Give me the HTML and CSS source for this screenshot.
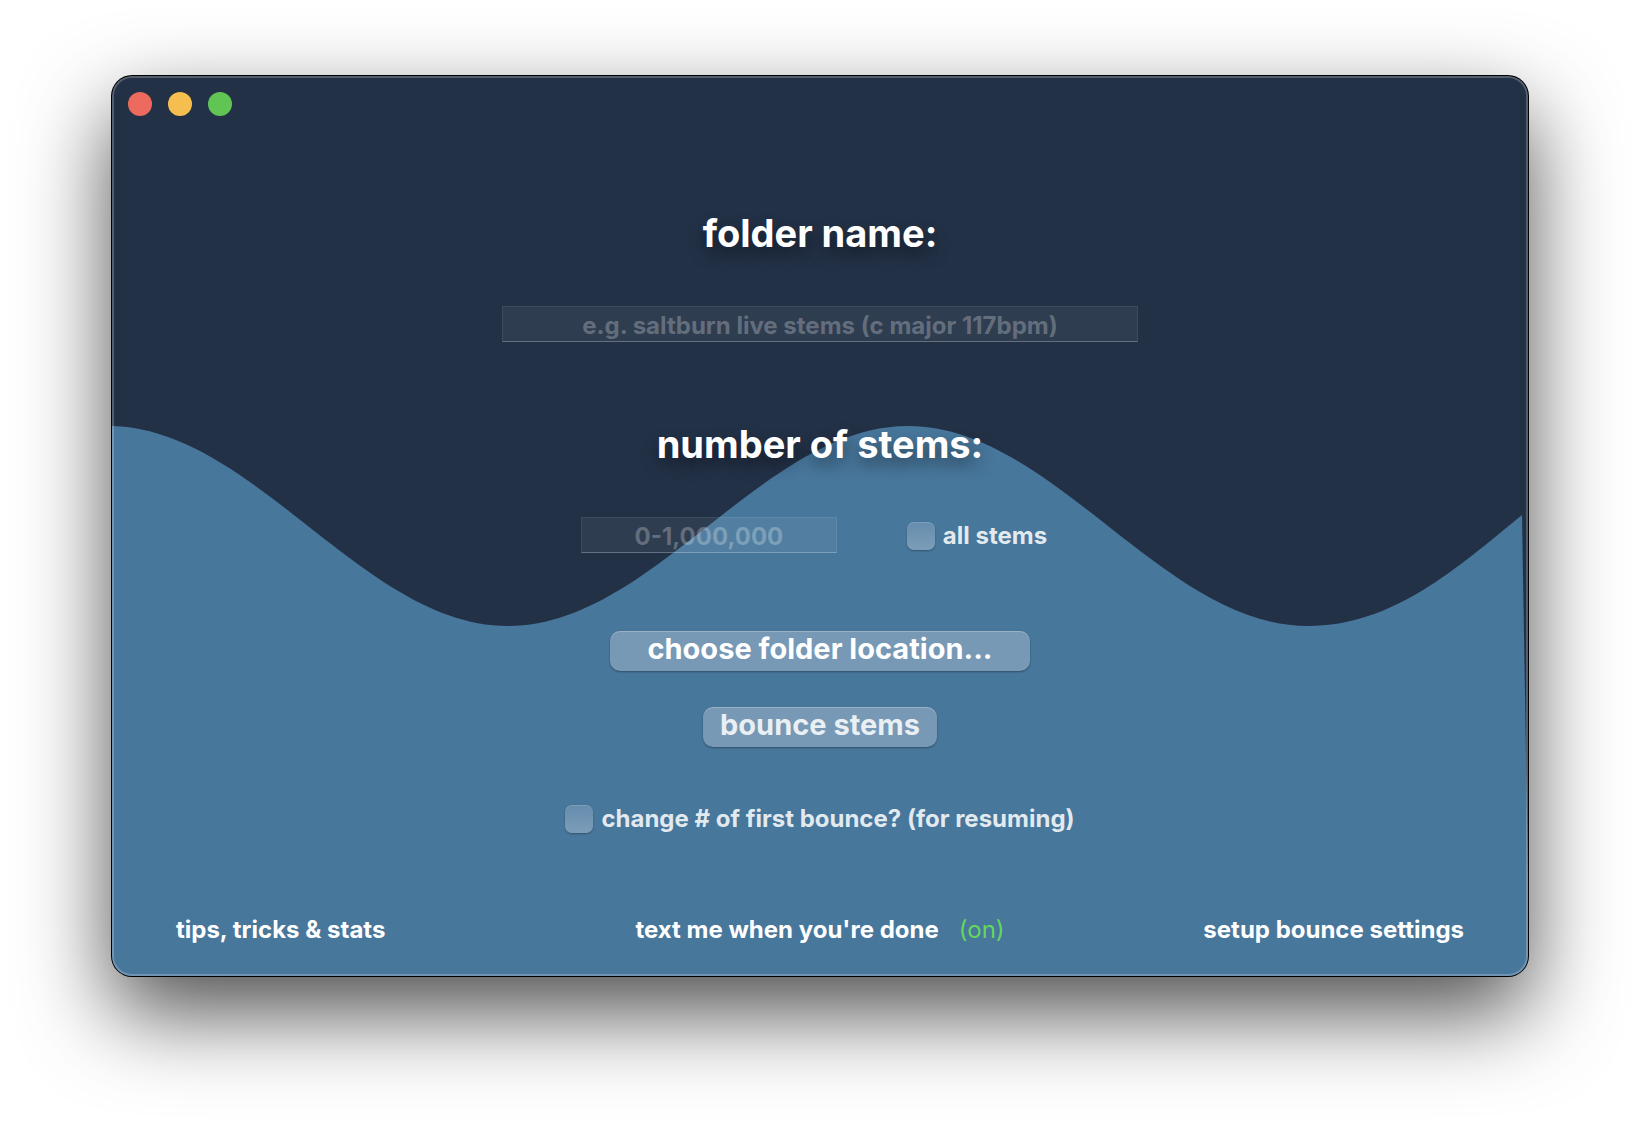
FILE: index.html
```html
<!DOCTYPE html>
<html lang="en">
<head>
<meta charset="utf-8">
<title>bounce stems</title>
<link rel="stylesheet" href="styles.css">
</head>
<body>
<main class="window">
  <svg class="wave" viewBox="0 0 1416 900" preserveAspectRatio="none" aria-hidden="true">
    <path d="M-4 350C141 350 251 550 396 550S651 350 796 350S1051 550 1196 550C1281 550 1345 492 1410 439L1416 800V900H-4Z"/>
  </svg>
  <div class="titlebar">
    <button class="light light-close" type="button" aria-label="Close"></button>
    <button class="light light-minimize" type="button" aria-label="Minimize"></button>
    <button class="light light-zoom" type="button" aria-label="Zoom"></button>
  </div>
  <form class="form">
    <label class="heading" for="folder">folder name:</label>
    <input class="field field-folder" id="folder" type="text" placeholder="e.g. saltburn live stems (c major 117bpm)">
    <label class="heading heading-stems" for="stems">number of stems:</label>
    <div class="stems-row">
      <input class="field field-stems" id="stems" type="text" placeholder="0-1,000,000">
      <label class="check"><input class="box" type="checkbox">all stems</label>
    </div>
    <button class="button button-wide" type="button">choose folder location...</button>
    <button class="button button-bounce" type="button">bounce stems</button>
    <label class="check check-resume"><input class="box" type="checkbox">change # of first bounce? (for resuming)</label>
  </form>
  <footer class="footer">
    <a class="link" href="#tips">tips, tricks &amp; stats</a>
    <div class="notify"><a class="link" href="#text">text me when you're done</a><span class="state">(on)</span></div>
    <a class="link link-end" href="#setup">setup bounce settings</a>
  </footer>
</main>
</body>
</html>
```
FILE: styles.css
```css
* {
  box-sizing: border-box;
}

body {
  display: flex;
  min-height: 100vh;
  margin: 0;
  padding: 76px 112px 148px;
  background: #fff;
  color: #fff;
  font: 700 24px/32px Inter, "Liberation Sans", sans-serif;
}

.window {
  position: relative;
  display: flex;
  flex: 1;
  flex-direction: column;
  overflow: hidden;
  border-radius: 20px;
  background: #233147;
  box-shadow: 0 0 0 1px #000, 0 36px 88px rgba(0, 0, 0, 0.7);
}

.window::after {
  position: absolute;
  inset: 0;
  border: 2px solid rgba(255, 255, 255, 0.22);
  border-radius: 20px;
  content: "";
  pointer-events: none;
}

.wave {
  position: absolute;
  inset: 0;
  width: 100%;
  height: 100%;
  fill: #48779c;
}

.titlebar,
.form,
.footer {
  position: relative;
}

.titlebar {
  display: flex;
  gap: 16px;
  padding: 16px;
}

.light {
  width: 24px;
  height: 24px;
  padding: 0;
  border: 0;
  border-radius: 50%;
}

.light-close {
  background: #ed6a5e;
}

.light-minimize {
  background: #f5bf4f;
}

.light-zoom {
  background: #61c554;
}

.form {
  display: flex;
  flex: 1;
  flex-direction: column;
  align-items: center;
  padding-top: 77px;
}

.heading {
  font-size: 38px;
  line-height: 48px;
  text-shadow: 0 8px 16px rgba(0, 0, 0, 0.45);
}

.heading-stems {
  margin-top: 78px;
}

.field {
  height: 36px;
  margin: 0;
  padding: 2px 8px 0;
  border: 1px solid rgba(255, 255, 255, 0.12);
  border-bottom-color: rgba(255, 255, 255, 0.3);
  border-radius: 0;
  background: rgba(255, 255, 255, 0.06);
  background-clip: padding-box;
  color: #fff;
  font: inherit;
  text-align: center;
}

.field::placeholder {
  color: rgba(255, 255, 255, 0.26);
  opacity: 1;
}

.field-folder {
  width: 636px;
  margin-top: 49px;
}

.stems-row {
  display: flex;
  align-items: center;
  gap: 70px;
  margin-top: 49px;
}

.field-stems {
  width: 256px;
}

.check {
  display: flex;
  align-items: center;
  gap: 8px;
  color: rgba(255, 255, 255, 0.85);
}

.stems-row .check {
  padding: 2px 12px 0 0;
}

.box {
  width: 28px;
  height: 28px;
  margin: 0;
  appearance: none;
  border-radius: 7px;
  background: linear-gradient(#658dad, #7c9db9);
  box-shadow: 0 1px 2px rgba(0, 0, 0, 0.3), inset 0 1px rgba(255, 255, 255, 0.15);
}

.button {
  height: 40px;
  padding: 0 0 4px;
  border: 0;
  border-radius: 10px;
  background: #7799b6;
  box-shadow: 0 1px 2px rgba(0, 0, 0, 0.35), inset 0 1px rgba(255, 255, 255, 0.25);
  color: #fff;
  font: inherit;
  font-size: 29px;
}

.button-wide {
  width: 420px;
  margin-top: 78px;
}

.button-bounce {
  width: 234px;
  margin-top: 36px;
  color: rgba(255, 255, 255, 0.85);
}

.check-resume {
  margin-top: 56px;
}

.footer {
  display: grid;
  grid-template-columns: 1fr auto 1fr;
  align-items: center;
  padding: 0 64px 30px;
}

.link {
  color: #fff;
  text-decoration: none;
}

.link-end {
  text-align: right;
}

.notify {
  display: flex;
  gap: 20px;
}

.state {
  color: #65d65c;
  font-weight: 400;
}
```
